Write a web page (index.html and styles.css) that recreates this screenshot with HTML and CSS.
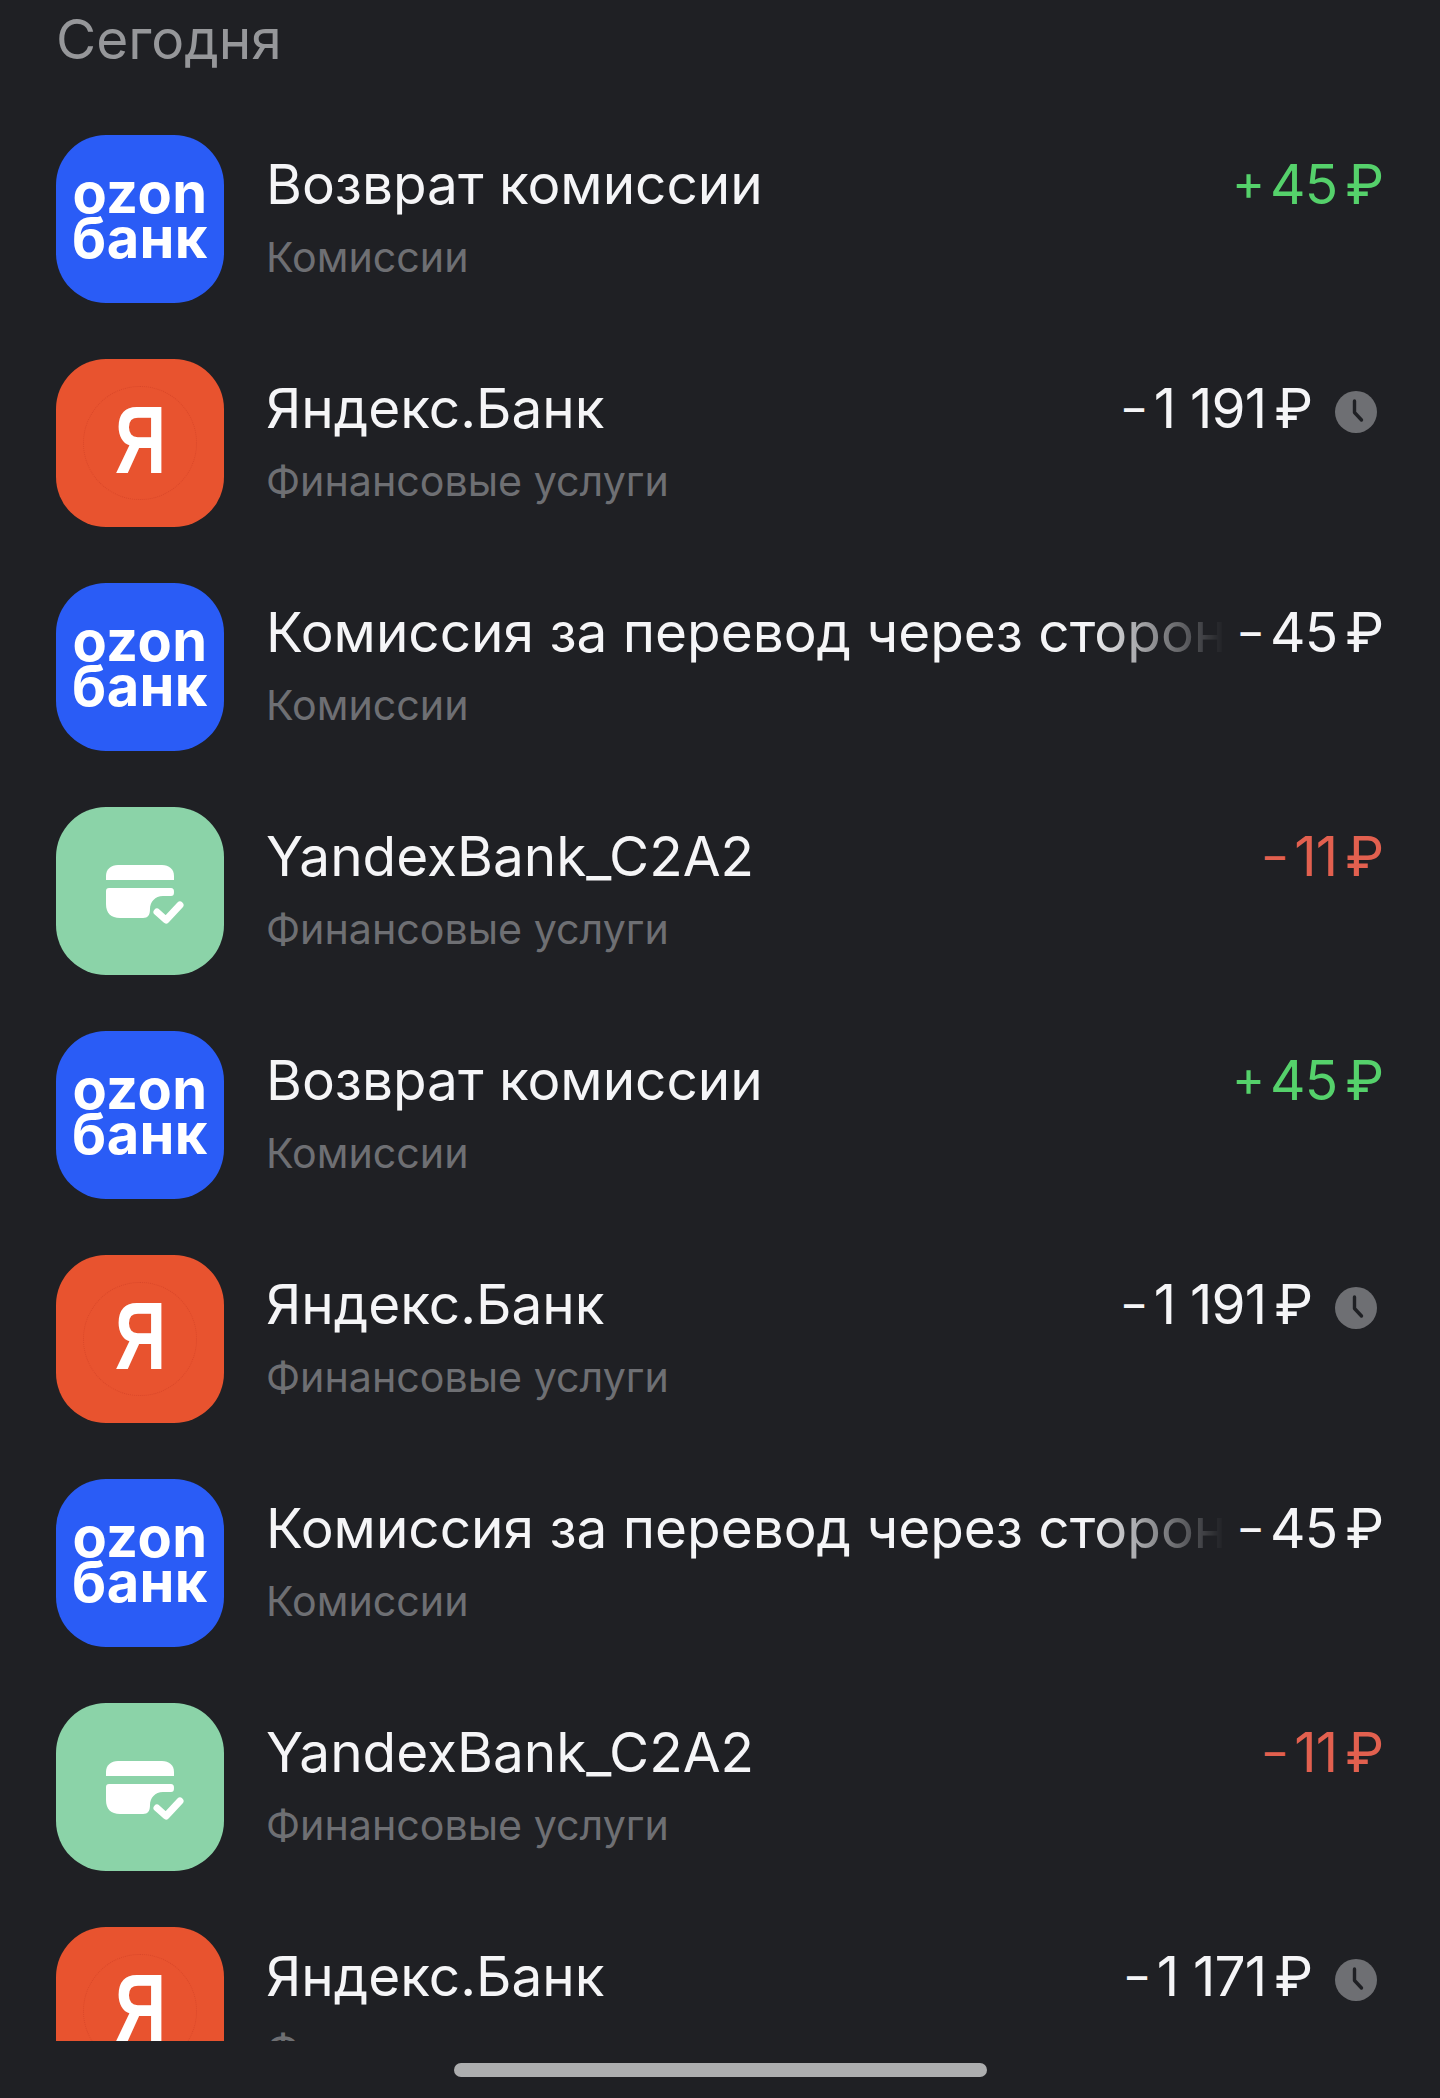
FILE: index.html
```html
<!DOCTYPE html>
<html lang="ru">
<head>
<meta charset="utf-8">
<title>Сегодня</title>
<link rel="stylesheet" href="styles.css">
</head>
<body>
<main class="screen">
  <h2 class="day">Сегодня</h2>
  <ul class="list">
    <li class="row">
      <div class="logo ozon"><span>ozon</span><span>банк</span></div>
      <div class="info">
        <div class="line"><span class="title">Возврат комиссии</span><span class="amount plus"><span class="sign">+</span><span class="num">45</span><span class="rub">₽</span></span></div>
        <div class="sub">Комиссии</div>
      </div>
    </li>
    <li class="row">
      <div class="logo ya"><i class="ring"></i><span>Я</span></div>
      <div class="info">
        <div class="line"><span class="title">Яндекс.Банк</span><span class="amount"><span class="sign">−</span><span class="num">1 191</span><span class="rub">₽</span></span><svg class="clock" viewBox="0 0 42 42"><circle cx="21" cy="21" r="21" fill="#6e6f73"/><path d="M19.5 10v11.5l7 7.5" fill="none" stroke="#1f2024" stroke-width="3.4" stroke-linecap="round" stroke-linejoin="round"/></svg></div>
        <div class="sub">Финансовые услуги</div>
      </div>
    </li>
    <li class="row">
      <div class="logo ozon"><span>ozon</span><span>банк</span></div>
      <div class="info">
        <div class="line"><span class="title fade">Комиссия за перевод через сторонн</span><span class="amount"><span class="sign">−</span><span class="num">45</span><span class="rub">₽</span></span></div>
        <div class="sub">Комиссии</div>
      </div>
    </li>
    <li class="row">
      <div class="logo card"><svg viewBox="0 0 168 168"><path d="M50 73V69C50 62 55 58 62 58H106C113 58 118 62 118 69V73Z" fill="#fff"/><path d="M50 84C50 82 51 81 53 81H115C117 81 118 82 118 85C118 88 117 89 115 89H107C99 89 94 95 94 102C94 108 92 111 87 111H64C55 111 50 106 50 97Z" fill="#fff"/><path d="M101 105L110 113L124 98" fill="none" stroke="#fff" stroke-width="7" stroke-linecap="round" stroke-linejoin="round"/></svg></div>
      <div class="info">
        <div class="line"><span class="title">YandexBank_C2A2</span><span class="amount minus"><span class="sign">−</span><span class="num">11</span><span class="rub">₽</span></span></div>
        <div class="sub">Финансовые услуги</div>
      </div>
    </li>
    <li class="row">
      <div class="logo ozon"><span>ozon</span><span>банк</span></div>
      <div class="info">
        <div class="line"><span class="title">Возврат комиссии</span><span class="amount plus"><span class="sign">+</span><span class="num">45</span><span class="rub">₽</span></span></div>
        <div class="sub">Комиссии</div>
      </div>
    </li>
    <li class="row">
      <div class="logo ya"><i class="ring"></i><span>Я</span></div>
      <div class="info">
        <div class="line"><span class="title">Яндекс.Банк</span><span class="amount"><span class="sign">−</span><span class="num">1 191</span><span class="rub">₽</span></span><svg class="clock" viewBox="0 0 42 42"><circle cx="21" cy="21" r="21" fill="#6e6f73"/><path d="M19.5 10v11.5l7 7.5" fill="none" stroke="#1f2024" stroke-width="3.4" stroke-linecap="round" stroke-linejoin="round"/></svg></div>
        <div class="sub">Финансовые услуги</div>
      </div>
    </li>
    <li class="row">
      <div class="logo ozon"><span>ozon</span><span>банк</span></div>
      <div class="info">
        <div class="line"><span class="title fade">Комиссия за перевод через сторонн</span><span class="amount"><span class="sign">−</span><span class="num">45</span><span class="rub">₽</span></span></div>
        <div class="sub">Комиссии</div>
      </div>
    </li>
    <li class="row">
      <div class="logo card"><svg viewBox="0 0 168 168"><path d="M50 73V69C50 62 55 58 62 58H106C113 58 118 62 118 69V73Z" fill="#fff"/><path d="M50 84C50 82 51 81 53 81H115C117 81 118 82 118 85C118 88 117 89 115 89H107C99 89 94 95 94 102C94 108 92 111 87 111H64C55 111 50 106 50 97Z" fill="#fff"/><path d="M101 105L110 113L124 98" fill="none" stroke="#fff" stroke-width="7" stroke-linecap="round" stroke-linejoin="round"/></svg></div>
      <div class="info">
        <div class="line"><span class="title">YandexBank_C2A2</span><span class="amount minus"><span class="sign">−</span><span class="num">11</span><span class="rub">₽</span></span></div>
        <div class="sub">Финансовые услуги</div>
      </div>
    </li>
    <li class="row">
      <div class="logo ya"><i class="ring"></i><span>Я</span></div>
      <div class="info">
        <div class="line"><span class="title">Яндекс.Банк</span><span class="amount"><span class="sign">−</span><span class="num">1 171</span><span class="rub">₽</span></span><svg class="clock" viewBox="0 0 42 42"><circle cx="21" cy="21" r="21" fill="#6e6f73"/><path d="M19.5 10v11.5l7 7.5" fill="none" stroke="#1f2024" stroke-width="3.4" stroke-linecap="round" stroke-linejoin="round"/></svg></div>
        <div class="sub">Финансовые услуги</div>
      </div>
    </li>
  </ul>
  <div class="home"><i class="bar"></i></div>
</main>
</body>
</html>
```
FILE: styles.css
```css
* { box-sizing: border-box; }
html, body { margin: 0; padding: 0; background: #1f2024; }
.screen {
  width: 1440px;
  height: 2098px;
  overflow: hidden;
  display: flex;
  flex-direction: column;
  font-family: Inter, "Liberation Sans", sans-serif;
  color: #f5f5f7;
}
.day {
  margin: 0;
  height: 135px;
  padding: 5px 0 0 56px;
  font-size: 55px;
  line-height: 68px;
  font-weight: 400;
  color: #96979a;
}
.list {
  list-style: none;
  margin: 0;
  padding: 0;
  height: 1906px;
  flex: none;
  overflow: hidden;
  display: flex;
  flex-direction: column;
  gap: 56px;
}
.row {
  flex: none;
  height: 168px;
  display: flex;
  gap: 42px;
  padding: 0 56px 0 56px;
}
.logo {
  position: relative;
  flex: none;
  width: 168px;
  height: 168px;
  border-radius: 50px;
  display: flex;
  flex-direction: column;
  align-items: center;
  justify-content: center;
  color: #fff;
}
.logo svg { display: block; width: 168px; height: 168px; }
.ozon {
  background: #2a5cf6;
  font-size: 56px;
  line-height: 45px;
  font-weight: 700;
  letter-spacing: .4px;
  padding-bottom: 6px;
}
.ya {
  background: #e8532f;
  font-family: "Liberation Sans", sans-serif;
  font-size: 96px;
  font-weight: 700;
  line-height: 96px;
}
.ring {
  position: absolute;
  inset: 27px;
  border: 1px dotted #d9482a;
  border-radius: 50%;
}
.ya span { position: relative; top: -3px; transform: scaleX(.74); }
.card { background: #8bd3a8; }
.info { flex: 1; min-width: 0; display: flex; flex-direction: column; }
.line {
  display: flex;
  align-items: baseline;
  height: 97px;
  padding-top: 13px;
  font-size: 54.9px;
  line-height: 72px;
}
.title {
  flex: 1;
  min-width: 0;
  white-space: nowrap;
  overflow: hidden;
}
.fade {
  -webkit-mask-image: linear-gradient(90deg, #000 86%, transparent 100%);
  mask-image: linear-gradient(90deg, #000 86%, transparent 100%);
}
.amount {
  flex: none;
  display: inline-flex;
  align-items: baseline;
  margin-left: 12px;
  font-size: 55px;
}
.num { letter-spacing: -.8px; }
.sign {
  font-size: 44px;
  margin-right: 5px;
  position: relative;
  top: -5px;
}
.plus .sign { font-size: 50px; top: -4px; }
.rub { margin-left: 8px; }
.plus { color: #55d16b; }
.minus { color: #e2604f; }
.clock {
  flex: none;
  width: 42px;
  height: 42px;
  margin: 0 7px 4px 22px;
  align-self: center;
}
.sub {
  font-size: 41.2px;
  line-height: 50px;
  color: #6e6f73;
}
.home {
  flex: 1;
  display: flex;
  justify-content: center;
  padding-top: 22px;
}
.bar {
  width: 533px;
  height: 14px;
  border-radius: 7px;
  background: #adaeaf;
}
```
